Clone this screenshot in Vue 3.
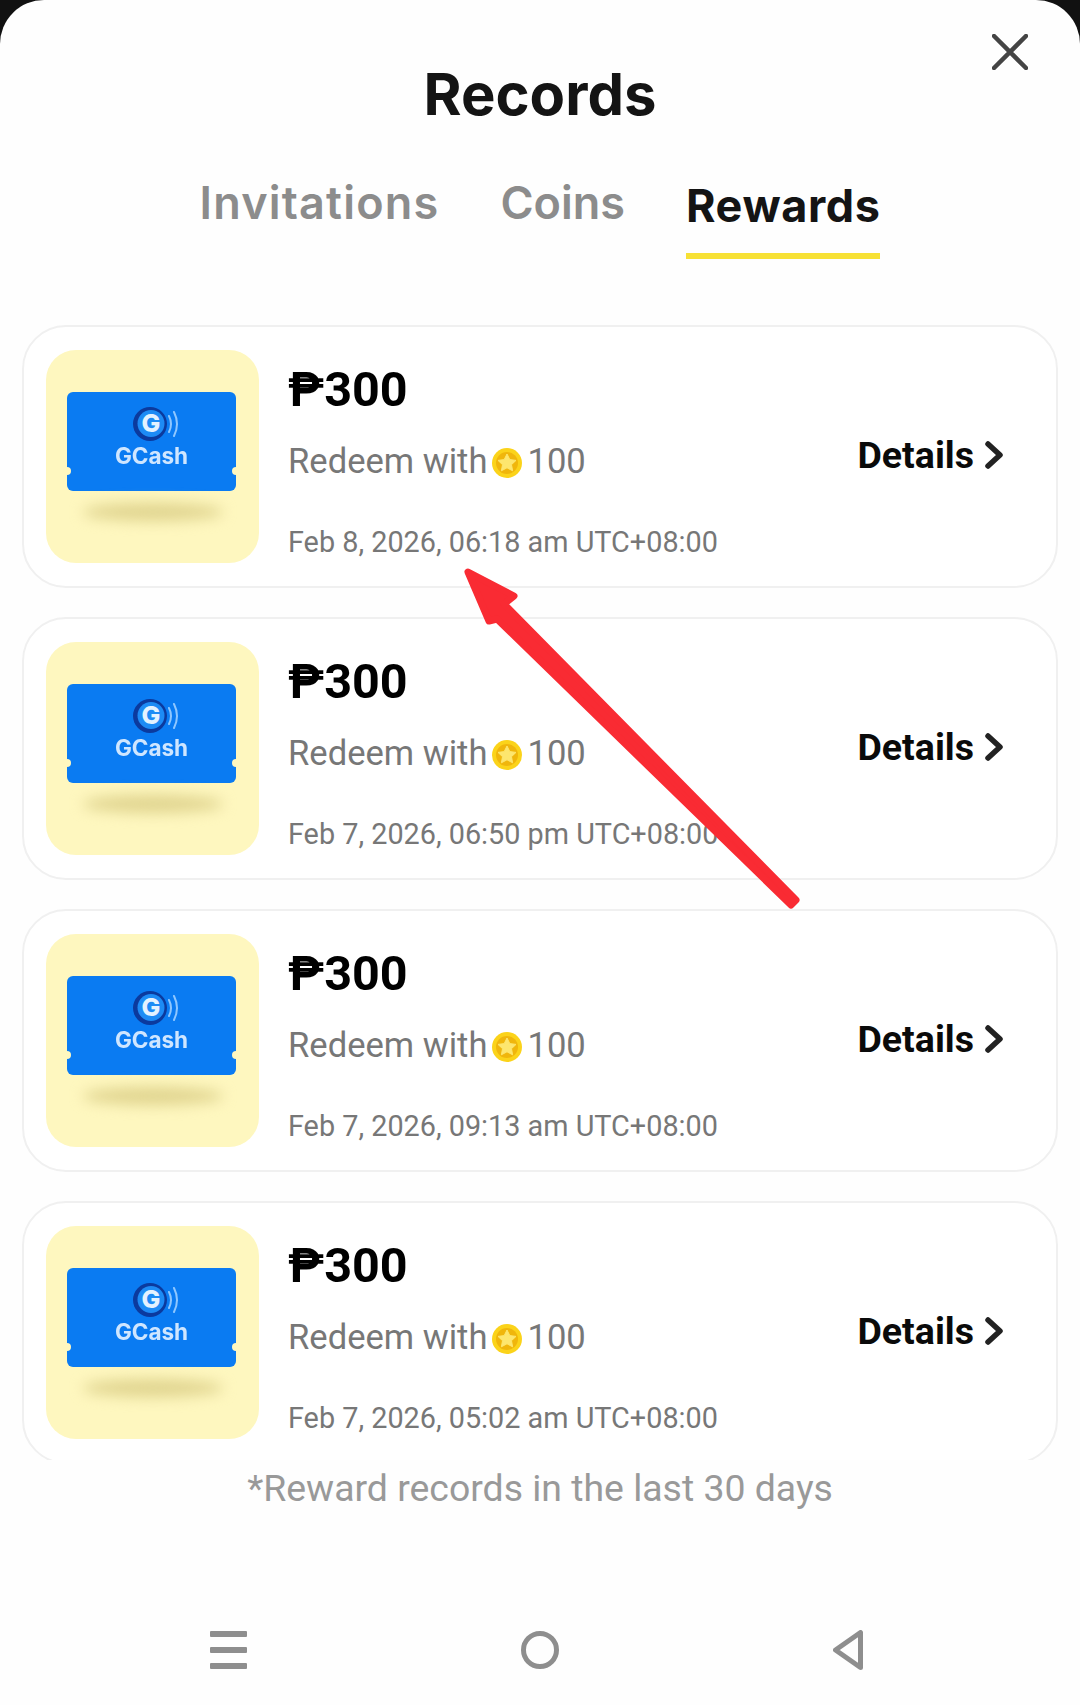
<script setup>
const records = [
  { id: 1, date: 'Feb 8, 2026, 06:18 am UTC+08:00' },
  { id: 2, date: 'Feb 7, 2026, 06:50 pm UTC+08:00' },
  { id: 3, date: 'Feb 7, 2026, 09:13 am UTC+08:00' },
  { id: 4, date: 'Feb 7, 2026, 05:02 am UTC+08:00' },
]
</script>

<template>
  <div class="sheet">
    <svg class="close" viewBox="0 0 36 36" fill="none" aria-hidden="true">
      <path d="M2 2l32 32M34 2L2 34" stroke="#444" stroke-width="4.5" stroke-linecap="round"/>
    </svg>

    <h1 class="title">Records</h1>

    <div class="tabs">
      <span class="tab tab--wide">Invitations</span>
      <span class="tab">Coins</span>
      <span class="tab tab--active">Rewards</span>
    </div>

    <div class="list">
      <div v-for="item in records" :key="item.id" class="card">
        <div class="thumb">
          <div class="ticket">
            <svg class="logo" viewBox="0 0 48 36" aria-hidden="true">
              <circle cx="18" cy="18" r="17" fill="#0b3a9e"/>
              <circle cx="19" cy="17.5" r="13.5" fill="#1d8bf5"/>
              <text x="19" y="26" text-anchor="middle" class="logo-g">G</text>
              <path d="M37 10q4 8 0 16M42 6q6 12 0 24" fill="none" stroke="#8fc7ff" stroke-width="2" stroke-linecap="round"/>
            </svg>
            <span class="brand">GCash</span>
            <i class="notch notch--l"></i>
            <i class="notch notch--r"></i>
          </div>
          <div class="shadow"></div>
        </div>

        <div class="info">
          <div class="amount">₱300</div>
          <div class="redeem">
            Redeem with
            <svg class="coin" viewBox="0 0 30 30" aria-hidden="true">
              <circle cx="15" cy="15" r="15" fill="#fbd31a"/>
              <circle cx="15" cy="15" r="11" fill="#f0b60c"/>
              <path d="M15 6l2.8 5.6 6.2.8-4.5 4.3 1.1 6.1-5.6-3-5.6 3 1.1-6.1L6 12.4l6.2-.8z" fill="#fde66e" stroke="#fde66e" stroke-linejoin="round"/>
            </svg>
            100
          </div>
          <div class="date">{{ item.date }}</div>
        </div>

        <div class="details">
          Details
          <svg class="chevron" viewBox="0 0 18 28" fill="none" aria-hidden="true">
            <path d="M3 3l12 11L3 25" stroke="#222" stroke-width="5.5" stroke-linecap="round" stroke-linejoin="round"/>
          </svg>
        </div>
      </div>
    </div>

    <p class="note">*Reward records in the last 30 days</p>

    <div class="nav">
      <svg class="nav-menu" viewBox="0 0 37 38" aria-hidden="true">
        <rect width="37" height="6" rx="1" fill="#8e8e8e"/>
        <rect y="16" width="37" height="6" rx="1" fill="#8e8e8e"/>
        <rect y="32" width="37" height="6" rx="1" fill="#8e8e8e"/>
      </svg>
      <svg class="nav-home" viewBox="0 0 38 38" fill="none" aria-hidden="true">
        <circle cx="19" cy="19" r="16.5" stroke="#8e8e8e" stroke-width="5"/>
      </svg>
      <svg class="nav-back" viewBox="0 0 30 40" fill="none" aria-hidden="true">
        <path d="M27.5 2.5v35L2.5 20z" stroke="#8e8e8e" stroke-width="5" stroke-linejoin="round"/>
      </svg>
    </div>

    <!-- red annotation drawn over the screenshot -->
    <svg class="arrow" viewBox="0 0 1080 1705" aria-hidden="true">
      <path d="M468 572L514 596L504 604L796 900L791 905L497 619L489 621Z" fill="#f92b33" stroke="#f92b33" stroke-width="7" stroke-linejoin="round"/>
    </svg>
  </div>
</template>

<style scoped>
.sheet {
  position: relative;
  box-sizing: border-box;
  width: 1080px;
  height: 1705px;
  background: #fefefe;
  border-radius: 44px 44px 0 0;
  overflow: hidden;
  font-family: Roboto, "Liberation Sans", sans-serif;
}

.close {
  position: absolute;
  top: 34px;
  right: 52px;
  width: 36px;
  height: 36px;
}

.title {
  margin: 0;
  padding-top: 62px;
  font-family: Inter, sans-serif;
  font-size: 58px;
  line-height: 64px;
  font-weight: 700;
  letter-spacing: 0;
  color: #141414;
  text-align: center;
}

.tabs {
  display: flex;
  justify-content: center;
  align-items: flex-start;
  gap: 61px;
  margin-top: 51px;
  font-family: Inter, sans-serif;
  font-size: 45px;
  line-height: 52px;
  font-weight: 600;
  color: #8c8c8c;
}

.tab--wide {
  letter-spacing: 1.2px;
}

.tab--active {
  margin-top: 3px;
  padding-bottom: 21px;
  border-bottom: 6px solid #f7e135;
  font-weight: 700;
  letter-spacing: 0.6px;
  color: #141414;
}

.list {
  display: flex;
  flex-direction: column;
  gap: 29px;
  height: 1135px;
  margin: 66px 22px 0;
  overflow: hidden;
}

.card {
  flex: none;
  display: flex;
  align-items: center;
  box-sizing: border-box;
  height: 263px;
  padding: 0 53px 0 22px;
  border: 2px solid #f0f0f0;
  border-radius: 44px;
  background: #fff;
}

.thumb {
  flex: none;
  display: flex;
  flex-direction: column;
  align-items: center;
  box-sizing: border-box;
  width: 213px;
  height: 213px;
  padding-top: 42px;
  border-radius: 30px;
  background: #fef7bf;
}

.ticket {
  position: relative;
  display: flex;
  flex-direction: column;
  align-items: center;
  box-sizing: border-box;
  width: 169px;
  height: 99px;
  margin-right: 2px;
  padding-top: 14px;
  border-radius: 6px;
  background: #0a7bf2;
  filter: blur(0.5px);
}

.logo {
  width: 48px;
  height: 36px;
  margin-left: 8px;
}

.logo-g {
  font-family: Inter, sans-serif;
  font-size: 25px;
  font-weight: 800;
  fill: #e4f2ff;
}

.brand {
  margin-top: 1px;
  font-family: Inter, sans-serif;
  font-size: 22.5px;
  line-height: 26px;
  font-weight: 700;
  color: #cfe6ff;
}

.notch {
  position: absolute;
  top: 75px;
  width: 8px;
  height: 8px;
  border-radius: 50%;
  background: #fef7bf;
}

.notch--l { left: -4px; }
.notch--r { right: -4px; }

.shadow {
  width: 140px;
  height: 18px;
  margin-top: 12px;
  border-radius: 50%;
  background: #e0d48f;
  filter: blur(7px);
}

.info {
  flex: 1;
  margin: 9px 0 0 29px;
}

.amount {
  font-size: 48.5px;
  line-height: 54px;
  font-weight: 700;
  color: #000;
}

.redeem {
  display: flex;
  align-items: center;
  gap: 5px;
  margin-top: 24px;
  font-size: 34.6px;
  line-height: 40px;
  color: #777;
}

.coin {
  width: 30px;
  height: 30px;
  margin-top: 4px;
}

.date {
  margin-top: 44px;
  font-size: 28.8px;
  line-height: 34px;
  color: #777;
}

.details {
  display: flex;
  align-items: center;
  gap: 11px;
  margin-top: -3px;
  font-size: 37.5px;
  line-height: 44px;
  font-weight: 700;
  color: #0a0a0a;
}

.chevron {
  width: 18px;
  height: 28px;
}

.note {
  margin: 6px 0 0;
  font-size: 37.4px;
  line-height: 44px;
  color: #999;
  text-align: center;
}

.nav {
  display: flex;
  justify-content: space-between;
  align-items: center;
  margin-top: 120px;
  padding: 0 217px 0 210px;
}

.nav-menu { width: 37px; height: 38px; }
.nav-home { width: 38px; height: 38px; }
.nav-back { width: 30px; height: 40px; }

.arrow {
  position: absolute;
  top: 0;
  left: 0;
  width: 1080px;
  height: 1705px;
  pointer-events: none;
}
</style>

<style>
html, body { background: #111; }
</style>
